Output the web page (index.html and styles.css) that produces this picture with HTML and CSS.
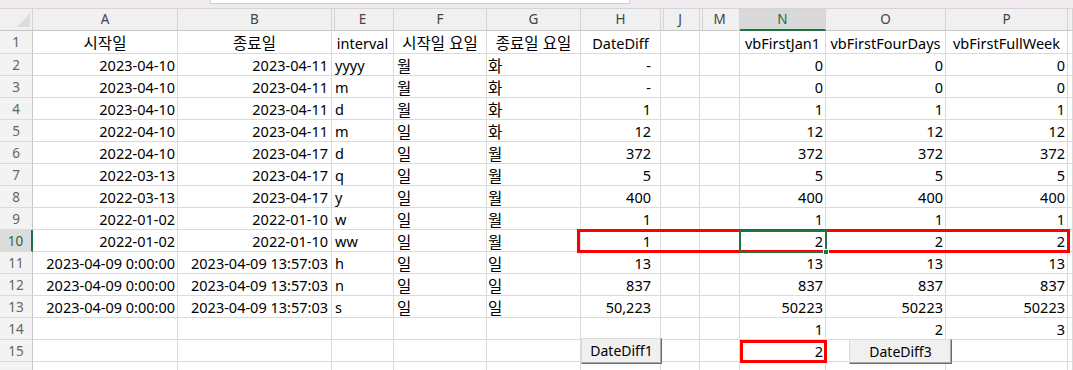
FILE: index.html
```html
<!DOCTYPE html>
<html lang="ko">
<head>
<meta charset="utf-8">
<title>DateDiff</title>
<link rel="stylesheet" href="styles.css">
</head>
<body>
<div class="sheet">
  <div class="topbar"><div class="formula"></div></div>

  <div class="row hdr">
    <div class="corner"></div><div>A</div><div>B</div><div class="hid">E</div><div>F</div><div>G</div><div>H</div><div class="hid">J</div><div class="hid">M</div><div class="cur">N</div><div>O</div><div>P</div><div></div>
  </div>

  <div class="row first">
    <div class="rh">1</div><div class="ctr ko">시작일</div><div class="ctr ko">종료일</div><div class="ctr">interval</div><div class="ctr ko">시작일 요일</div><div class="ctr ko">종료일 요일</div><div class="ctr">DateDiff</div><div></div><div></div><div class="ctr">vbFirstJan1</div><div class="ctr">vbFirstFourDays</div><div class="ctr">vbFirstFullWeek</div><div></div>
  </div>

  <div class="row">
    <div class="rh">2</div><div class="num">2023-04-10</div><div class="num nb">2023-04-11</div><div class="txt">yyyy</div><div class="txt ko">월</div><div class="txt g ko">화</div><div class="acc">-</div><div></div><div></div><div class="num">0</div><div class="num">0</div><div class="num">0</div><div></div>
  </div>
  <div class="row">
    <div class="rh">3</div><div class="num">2023-04-10</div><div class="num nb">2023-04-11</div><div class="txt">m</div><div class="txt ko">월</div><div class="txt g ko">화</div><div class="acc">-</div><div></div><div></div><div class="num">0</div><div class="num">0</div><div class="num">0</div><div></div>
  </div>
  <div class="row">
    <div class="rh">4</div><div class="num">2023-04-10</div><div class="num nb">2023-04-11</div><div class="txt">d</div><div class="txt ko">월</div><div class="txt g ko">화</div><div class="acc">1</div><div></div><div></div><div class="num">1</div><div class="num">1</div><div class="num">1</div><div></div>
  </div>
  <div class="row">
    <div class="rh">5</div><div class="num">2022-04-10</div><div class="num nb">2023-04-11</div><div class="txt">m</div><div class="txt ko">일</div><div class="txt g ko">화</div><div class="acc">12</div><div></div><div></div><div class="num">12</div><div class="num">12</div><div class="num">12</div><div></div>
  </div>
  <div class="row">
    <div class="rh">6</div><div class="num">2022-04-10</div><div class="num nb">2023-04-17</div><div class="txt">d</div><div class="txt ko">일</div><div class="txt g ko">월</div><div class="acc">372</div><div></div><div></div><div class="num">372</div><div class="num">372</div><div class="num">372</div><div></div>
  </div>
  <div class="row">
    <div class="rh">7</div><div class="num">2022-03-13</div><div class="num nb">2023-04-17</div><div class="txt">q</div><div class="txt ko">일</div><div class="txt g ko">월</div><div class="acc">5</div><div></div><div></div><div class="num">5</div><div class="num">5</div><div class="num">5</div><div></div>
  </div>
  <div class="row">
    <div class="rh">8</div><div class="num">2022-03-13</div><div class="num nb">2023-04-17</div><div class="txt">y</div><div class="txt ko">일</div><div class="txt g ko">월</div><div class="acc">400</div><div></div><div></div><div class="num">400</div><div class="num">400</div><div class="num">400</div><div></div>
  </div>
  <div class="row">
    <div class="rh">9</div><div class="num">2022-01-02</div><div class="num nb">2022-01-10</div><div class="txt">w</div><div class="txt ko">일</div><div class="txt g ko">월</div><div class="acc">1</div><div></div><div></div><div class="num">1</div><div class="num">1</div><div class="num">1</div><div></div>
  </div>
  <div class="row">
    <div class="rh cur">10</div><div class="num">2022-01-02</div><div class="num nb">2022-01-10</div><div class="txt">ww</div><div class="txt ko">일</div><div class="txt g ko">월</div><div class="acc">1</div><div></div><div></div><div class="num">2</div><div class="num">2</div><div class="num">2</div><div></div>
  </div>
  <div class="row">
    <div class="rh">11</div><div class="num">2023-04-09 0:00:00</div><div class="num nb">2023-04-09 13:57:03</div><div class="txt">h</div><div class="txt ko">일</div><div class="txt g ko">일</div><div class="acc">13</div><div></div><div></div><div class="num">13</div><div class="num">13</div><div class="num">13</div><div></div>
  </div>
  <div class="row">
    <div class="rh">12</div><div class="num">2023-04-09 0:00:00</div><div class="num nb">2023-04-09 13:57:03</div><div class="txt">n</div><div class="txt ko">일</div><div class="txt g ko">일</div><div class="acc">837</div><div></div><div></div><div class="num">837</div><div class="num">837</div><div class="num">837</div><div></div>
  </div>
  <div class="row">
    <div class="rh">13</div><div class="num">2023-04-09 0:00:00</div><div class="num nb">2023-04-09 13:57:03</div><div class="txt">s</div><div class="txt ko">일</div><div class="txt g ko">일</div><div class="acc">50,223</div><div></div><div></div><div class="num">50223</div><div class="num">50223</div><div class="num">50223</div><div></div>
  </div>
  <div class="row">
    <div class="rh">14</div><div></div><div></div><div></div><div></div><div></div><div></div><div></div><div></div><div class="num">1</div><div class="num">2</div><div class="num">3</div><div></div>
  </div>
  <div class="row">
    <div class="rh">15</div><div></div><div></div><div></div><div></div><div></div><div></div><div></div><div></div><div class="num">2</div><div></div><div></div><div></div>
  </div>
  <div class="row">
    <div class="rh"></div><div></div><div></div><div></div><div></div><div></div><div></div><div></div><div></div><div></div><div></div><div></div><div></div>
  </div>

  <div class="redbox row10box"></div>
  <div class="selection"><span class="handle"></span></div>
  <div class="redbox n15box"></div>
  <button class="btn btn1">DateDiff1</button>
  <button class="btn btn3">DateDiff3</button>
</div>
</body>
</html>
```
FILE: styles.css
```css
* { box-sizing: border-box; }
html, body { margin: 0; padding: 0; background: #fff; }
body {
  width: 1073px;
  height: 370px;
  overflow: hidden;
  font-family: "Noto Sans", "Noto Sans CJK KR", sans-serif;
  font-size: 14.5px;
  color: #000;
}
.sheet { position: relative; width: 1073px; height: 370px; }

.topbar {
  height: 9px;
  background: #eeeaee;
  border-bottom: 1px solid #d8d3d8;
  position: relative;
}
.formula {
  position: absolute;
  left: 210px;
  top: 0;
  width: 420px;
  height: 4px;
  background: #fff;
  border: 1px solid #cfcfcf;
  border-top: none;
}

.row {
  display: grid;
  grid-template-columns: 33px 145px 154px 62px 93px 94px 80px 39px 40px 86px 120px 122px 5px;
  height: 22px;
}
.row.first { height: 23px; }
.row > div {
  border-right: 1px solid #dadada;
  border-bottom: 1px solid #dadada;
  display: flex;
  align-items: center;
  white-space: nowrap;
  padding: 2px 2px 0;
  line-height: 1;
}
.row > .ko { font-family: "Noto Sans CJK KR", sans-serif; font-size: 15.5px; }

.hdr { background: #f0f0f0; }
.hdr > div {
  justify-content: center;
  font-size: 13.5px;
  color: #444;
  border-right-color: #d4d4d4;
  border-bottom-color: #c6c6c6;
  padding-top: 1px;
}
.hdr > .hid { box-shadow: inset 2px 0 0 #f0f0f0, inset 3px 0 0 #d4d4d4; }
.hdr > .cur {
  background: #d9d9d9;
  color: #1d6b41;
  border-bottom: 2px solid #217346;
}
.corner { position: relative; }
.corner::after {
  content: "";
  position: absolute;
  left: 17px;
  top: 4px;
  width: 13px;
  height: 14px;
  background: #dcdcdc;
  clip-path: polygon(100% 0, 100% 100%, 0 100%);
}

.row > .rh {
  background: #f3f3f3;
  justify-content: center;
  font-size: 13.5px;
  color: #666;
  border-right-color: #c6c6c6;
}
.row > .rh.cur {
  background: #dcdcdc;
  color: #1d6b41;
  border-right: 2px solid #217346;
}

.row > .ctr { justify-content: center; }
.row > .num { justify-content: flex-end; padding-right: 2px; }
.row > .nb { padding-right: 3px; }
.row > .txt { padding-left: 3px; }
.row > .txt.g { padding-left: 1px; }
.row > .acc { justify-content: flex-end; padding-right: 9px; }

.redbox {
  position: absolute;
  border: 3px solid #ff0000;
}
.row10box { left: 577px; top: 229px; width: 493px; height: 24px; }
.n15box { left: 740px; top: 340px; width: 87px; height: 23px; }

.selection {
  position: absolute;
  left: 739px;
  top: 230px;
  width: 88px;
  height: 23px;
  border: 2px solid #217346;
}
.handle {
  position: absolute;
  right: -4px;
  bottom: -4px;
  width: 6px;
  height: 6px;
  background: #217346;
  border: 1px solid #fff;
}

.btn {
  position: absolute;
  margin: 0;
  padding: 0;
  background: #f0f0f0;
  border: 1px solid;
  border-color: #d9d9d9 #6e6e6e #6e6e6e #d9d9d9;
  box-shadow: inset -1px -1px 0 #a8a8a8;
  font-family: "Noto Sans", sans-serif;
  font-size: 14px;
  color: #000;
  line-height: 1;
}
.btn1 { left: 581px; top: 338px; width: 81px; height: 26px; }
.btn3 { left: 849px; top: 339px; width: 103px; height: 25px; }
```
